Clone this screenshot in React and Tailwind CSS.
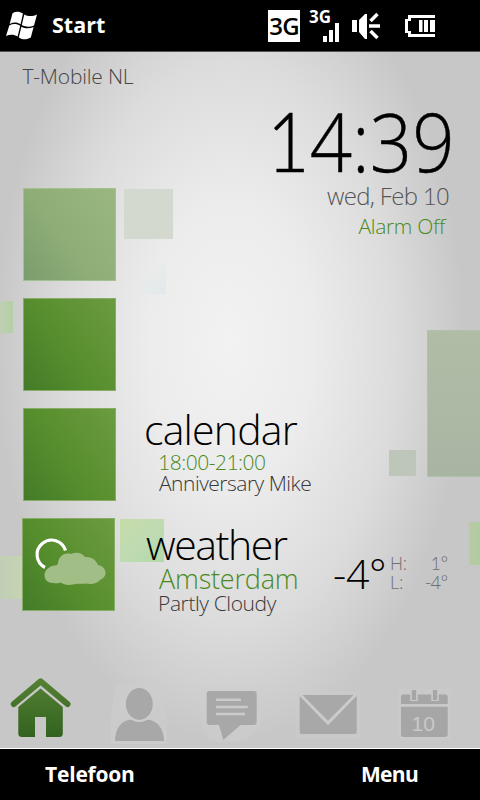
function Logo() {
  return (
    <svg width="33" height="32" viewBox="0 0 33 32" fill="#fff">
      <path d="M7.5 3.2C11 1 14.500 1.500 18 3.600L15.600 14.200C12 12 8.500 12 4.700 14z" />
      <path d="M19.300 4.500C23 6.500 27.500 6.600 32 4.500L29 15.400C25 17.400 21 17.300 16.800 15.100z" />
      <path d="M4.300 15.500C8 13.500 11.500 13.500 15.200 15.800L12.600 26.500C9 24.300 5 24.200 1 26z" />
      <path d="M16.400 16.700C20.500 18.800 24.500 18.900 28.600 16.900L25.800 27.500C21.500 30 17.500 29.800 13.800 27.400z" />
    </svg>
  );
}

function Speaker() {
  return (
    <svg width="29" height="28" viewBox="0 0 29 28" fill="#fff">
      <path d="M0 8h5v12H0zM7 8l6-6h2v25h-2l-6-7z" />
      <path d="M17 14h11M18.500 9l7-7M18.500 19l7 7" stroke="#fff" strokeWidth="3.500" />
    </svg>
  );
}

function Battery() {
  return (
    <svg width="30" height="22" viewBox="0 0 30 22" fill="#fff">
      <path d="M3 0h27v3H6v3H3v10h3v3h24v3H3v-4H0V4h3z" />
      <path d="M14 5h3.500v12H14zM19 5h4v12h-4zM25 5h5v12h-5z" />
    </svg>
  );
}

function StatusBar() {
  return (
    <header className="flex h-[52px] items-start border-b border-[#555] bg-black pt-[10px] pl-[5px] text-white">
      <Logo />
      <span className="mt-[4px] ml-[14px] w-[216px] text-[21.5px] leading-none font-bold">Start</span>
      <div className="flex h-8 w-8 items-center justify-center bg-white text-black">
        <span className="text-[24px] leading-none font-semibold tracking-[-0.8px]">3G</span>
      </div>
      <div className="ml-[9px] flex w-[31px] flex-col items-start">
        <span className="h-[13px] text-[17px] leading-[13px] font-bold">3G</span>
        <div className="flex h-[19px] items-end gap-[2px] pl-[14px]">
          <i className="h-[6px] w-[4px] bg-white" />
          <i className="h-[12px] w-[4px] bg-white" />
          <i className="h-[19px] w-[4px] bg-white" />
        </div>
      </div>
      <div className="mt-[2px] ml-[12px]"><Speaker /></div>
      <div className="mt-[5px] ml-[24px]"><Battery /></div>
    </header>
  );
}

// soft coloured squares floating behind the content
function Squares() {
  return (
    <div className="absolute inset-0 overflow-hidden">
      <div className="absolute top-[137px] left-[124px] h-[50px] w-[49px] bg-[#d3d9ce]" />
      <div className="absolute top-[210px] left-[138px] h-[32px] w-[28px] bg-linear-to-br from-transparent from-30% to-[#e1e9ea]" />
      <div className="absolute top-[249px] left-0 h-[32px] w-[13px] bg-linear-to-r from-[#bfcfb3] to-[#b5cfa6]" />
      <div className="absolute top-[278px] left-[427px] h-[147px] w-[53px] border border-r-0 border-[#b3c1aa] bg-linear-to-b from-[#afbda6] to-[#a9b5a3]" />
      <div className="absolute top-[398px] left-[389px] h-[26px] w-[27px] bg-[#bec6b9]" />
      <div className="absolute top-[467px] left-[120px] h-[43px] w-[44px] bg-linear-to-br from-[#c6dba9] via-[#c0dbb2] to-[#afdaa9]" />
      <div className="absolute top-[504px] left-0 h-[43px] w-[22px] bg-linear-to-r from-[#c0ceb5] to-[#c6d3b3]" />
      <div className="absolute top-[470px] left-[469px] h-[43px] w-[11px] bg-linear-to-r from-[#b9cba3] to-[#b0cba2]" />
    </div>
  );
}

const tileBase = "h-[93px] w-[93px] border";

function Tile({ children }) {
  return (
    <div className={`${tileBase} border-[#86ac66] bg-[linear-gradient(55deg,#437b29,#578e2d_45%,#6c9b40)]`}>
      {children}
    </div>
  );
}

function PartlyCloudy() {
  return (
    <svg width="91" height="91" viewBox="0 0 91 91">
      <path d="M22 48.500A14.500 14.500 0 1 1 42.500 31.500" fill="none" stroke="#fff" strokeWidth="3.200" />
      <path
        d="M30 64C25 64 21.500 61 21.500 56.500C21.500 51 26 47 32 46.500C35.500 46 34.500 44.500 35.500 41.500C37.500 36 42.500 33.500 48 35C53 32.500 59 33.500 62 38C68 37.500 73 40.500 75 46C80 47 83 50.500 82.500 55C82 58 79.500 60 77 61C74 65 68 65.500 63 64.500C58 65 54 64 50 65.500C44 66.500 41 65.500 37.500 63.500C35 64.500 32.500 64.500 30 64z"
        fill="#a0be86"
      />
    </svg>
  );
}

// figure one with a foot
function One() {
  return <span className="font-['Lato',sans-serif]">1</span>;
}

function Home() {
  return (
    <svg width="64" height="70" viewBox="0 0 64 70">
      <defs>
        <linearGradient id="home" x1="0" y1="0" x2="0" y2="62" gradientUnits="userSpaceOnUse">
          <stop offset="0" stopColor="#578235" />
          <stop offset="1" stopColor="#31621e" />
        </linearGradient>
      </defs>
      <path d="M5.800 28L32.600 5.400L59.500 28" fill="none" stroke="url(#home)" strokeWidth="6" strokeLinecap="round" strokeLinejoin="round" />
      <path d="M32.600 12.500L54.800 31V57.500Q54.800 61 51.300 61H38V41H27V61H14Q10.300 61 10.300 57.500V31z" fill="url(#home)" />
    </svg>
  );
}

function Person() {
  return (
    <svg width="56" height="70" viewBox="0 0 56 70" className="ml-[39px]">
      <path d="M4 9H48.500L56 42V68H0V42z" fill="#cdcdcd" opacity="0.6" />
      <path d="M4 65C4 53 10 44 21 43.500H35.500C46.500 44 53 53 53 65z" fill="#a8a8a8" />
      <ellipse cx="28.300" cy="28" rx="14.500" ry="17" fill="#a8a8a8" stroke="#cdcdcd" strokeWidth="2" />
    </svg>
  );
}

function Chat() {
  return (
    <svg width="62" height="70" viewBox="0 0 62 70" className="ml-[33px]">
      <path d="M1 11H61V48L45 66H10L1 48z" fill="#cdcdcd" opacity="0.5" />
      <path d="M9.500 15H54Q56.700 15 56.700 18V46Q56.700 49 54 49H40.500L23.300 64L19 49H9.500Q6.700 49 6.700 46V18Q6.700 15 9.500 15z" fill="#a8a8a8" />
      <path d="M16 23.700H41M16 31H47.700M16 38H45" stroke="#cacaca" strokeWidth="2.400" />
    </svg>
  );
}

function Mail() {
  return (
    <svg width="64" height="70" viewBox="0 0 64 70" className="ml-[34px]">
      <path d="M0 15H64V62H0z" fill="#cbcbcb" opacity="0.5" />
      <rect x="3.700" y="19" width="57" height="39" rx="2" fill="#a8a8a8" />
      <path d="M4.500 19L32 47L59.500 19" fill="none" stroke="#cbcbcb" strokeWidth="3" />
    </svg>
  );
}

function Agenda() {
  return (
    <svg width="53" height="70" viewBox="0 0 53 70" className="ml-[38px]">
      <path d="M0 13H53V64H0z" fill="#cbcbcb" opacity="0.5" />
      <path d="M3 28V20.500Q3 18.500 5.500 18.500H47Q49.700 18.500 49.700 20.500V28zM3 30.700H49.700V58Q49.700 61 47 61H5.500Q3 61 3 58z" fill="#a6a6a6" />
      <path d="M16 14V25M37 14V25" stroke="#c9c9c9" strokeWidth="7.500" />
      <path d="M16 14V24M37 14V24" stroke="#a6a6a6" strokeWidth="4.200" />
      <text x="25.300" y="55" textAnchor="middle" fontSize="21" fill="#c9c9c9" className="font-['Liberation_Sans',sans-serif]">10</text>
    </svg>
  );
}

export default function App() {
  return (
    <div className="flex h-[800px] w-[480px] flex-col overflow-hidden font-['Open_Sans',sans-serif]">
      <StatusBar />

      <main className="relative h-[696px] bg-[#c7c7c7] bg-[radial-gradient(ellipse_235px_400px_at_230px_290px,#f2f2f2,#ececec_35%,#dcdcdc_70%,#c7c7c7)]">
        <Squares />

        <div className="relative flex h-[624px] font-light leading-none whitespace-nowrap">
          {/* left column */}
          <div className="w-[145px] pt-[14px] pl-[22.5px]">
            <p className="text-[21px] tracking-[-0.2px] text-[#464646]">T-Mobile NL</p>
            <div className="mt-[101px] flex flex-col gap-[17px]">
              <div className={`${tileBase} border-[#a3c08f] bg-[linear-gradient(55deg,#7a9d6c,#8fae77_45%,#9ab780)]`} />
              <Tile />
              <Tile />
              <div className="-ml-px"><Tile><PartlyCloudy /></Tile></div>
            </div>
          </div>

          {/* right column */}
          <div className="flex-1 pt-[47px]">
            <div className="flex flex-col items-end pr-[31px] text-[#555]">
              <p className="mr-[-6px] origin-right scale-x-[0.905] text-[82px] text-black [-webkit-text-stroke:0.4px_black]"><One />4:39</p>
              <p className="mt-[3px] text-[24px] tracking-[-0.7px]">wed, Feb <One />0</p>
              <p className="mt-[8px] mr-[4px] text-[21px] tracking-[-0.3px] text-[#4a8a1c]">Alarm Off</p>
            </div>

            <div className="mt-[172px]">
              <h2 className="-ml-px text-[41px] tracking-[-0.8px] text-black">calendar</h2>
              <p className="mt-px ml-[13px] text-[21px] tracking-[-0.5px] text-[#4a8a1c]"><One />8:00-2<One />:00</p>
              <p className="ml-[14px] text-[21px] tracking-[-0.5px] text-[#383838]">Anniversary Mike</p>
            </div>

            <div className="mt-[30px] flex">
              <div className="w-[188px]">
                <h2 className="ml-px text-[41px] tracking-[-1.4px] text-black">weather</h2>
                <p className="ml-[14px] text-[27px] tracking-[-0.2px] text-[#4a8a1c]">Amsterdam</p>
                <p className="mt-px ml-[13px] text-[21px] tracking-[-0.4px] text-[#383838]">Partly Cloudy</p>
              </div>
              <p className="mt-[29px] w-[57px] text-[41px] tracking-[-0.3px] text-black">-4°</p>
              <div className="mt-[30px] grid w-[58px] grid-cols-2 content-start text-[18px] leading-[19px] tracking-[-0.3px] text-[#707070]">
                <span>H:</span>
                <span className="text-right"><One />°</span>
                <span>L:</span>
                <span className="text-right">-4°</span>
              </div>
            </div>
          </div>
        </div>

        <nav className="relative flex pl-[8px]">
          <Home />
          <Person />
          <Chat />
          <Mail />
          <Agenda />
        </nav>
      </main>

      <footer className="flex flex-1 justify-between border-t border-white bg-black pt-[15px] pr-[62px] pl-[45px] text-[21px] leading-none font-bold text-white">
        <span className="tracking-[-0.2px]">Telefoon</span>
        <span className="tracking-[-0.7px]">Menu</span>
      </footer>
    </div>
  );
}
